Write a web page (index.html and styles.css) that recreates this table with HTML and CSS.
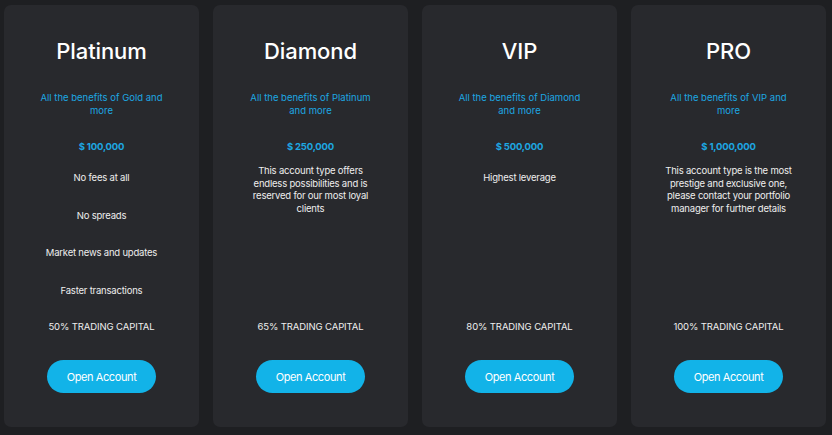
FILE: index.html
```html
<!DOCTYPE html>
<html>
<head>
<meta charset="utf-8">
<link rel="stylesheet" href="styles.css">
</head>
<body>
<div class="plans">
  <div class="card">
    <h2 class="title">Platinum</h2>
    <p class="sub">All the benefits of Gold and more</p>
    <p class="price">$ 100,000</p>
    <ul class="features">
      <li>No fees at all</li>
      <li>No spreads</li>
      <li>Market news and updates</li>
      <li>Faster transactions</li>
    </ul>
    <p class="capital">50% TRADING CAPITAL</p>
    <button class="btn">Open Account</button>
  </div>
  <div class="card">
    <h2 class="title">Diamond</h2>
    <p class="sub">All the benefits of Platinum and more</p>
    <p class="price">$ 250,000</p>
    <div class="features">
      <p class="desc">This account type offers endless possibilities and is reserved for our most loyal clients</p>
    </div>
    <p class="capital">65% TRADING CAPITAL</p>
    <button class="btn">Open Account</button>
  </div>
  <div class="card">
    <h2 class="title">VIP</h2>
    <p class="sub">All the benefits of Diamond and more</p>
    <p class="price">$ 500,000</p>
    <ul class="features">
      <li>Highest leverage</li>
    </ul>
    <p class="capital">80% TRADING CAPITAL</p>
    <button class="btn">Open Account</button>
  </div>
  <div class="card">
    <h2 class="title">PRO</h2>
    <p class="sub">All the benefits of VIP and more</p>
    <p class="price">$ 1,000,000</p>
    <div class="features">
      <p class="desc">This account type is the most prestige and exclusive one, please contact your portfolio manager for further details</p>
    </div>
    <p class="capital">100% TRADING CAPITAL</p>
    <button class="btn">Open Account</button>
  </div>
</div>
</body>
</html>
```
FILE: styles.css
```css
* { box-sizing: border-box; }
html, body {
  margin: 0;
  padding: 0;
  background: #1e1f22;
  font-family: "Inter", "Noto Sans", sans-serif;
}
.plans {
  display: flex;
  gap: 14px;
  padding: 5px 6px 8px 4px;
  height: 435px;
}
.card {
  width: 195px;
  height: 422px;
  background: #28292d;
  border-radius: 7px;
  display: flex;
  flex-direction: column;
  align-items: center;
  text-align: center;
  padding: 32px 30px 34px;
}
.title {
  margin: 0;
  font-size: 22px;
  line-height: 28px;
  font-weight: 500;
  color: #ffffff;
  letter-spacing: -0.1px;
}
.sub {
  margin: 26px 0 0;
  font-size: 9.5px;
  line-height: 13px;
  color: #1da7e2;
  letter-spacing: 0;
  max-width: 126px;
}
.price {
  margin: 23px 0 0;
  font-size: 9.5px;
  line-height: 13px;
  font-weight: 700;
  color: #1da7e2;
  letter-spacing: -0.2px;
}
.features {
  flex: 1;
  list-style: none;
  margin: 18px 0 0;
  padding: 0;
  display: flex;
  flex-direction: column;
  align-items: center;
  gap: 24.5px;
  font-size: 9.5px;
  line-height: 13px;
  color: #eeeeee;
  letter-spacing: -0.2px;
}
.desc {
  margin: -6px 0 0;
  line-height: 12.5px;
  max-width: 132px;
}
.capital {
  margin: 3px 0 0;
  font-size: 9.5px;
  line-height: 13px;
  color: #eeeeee;
  letter-spacing: -0.1px;
}
.btn {
  margin-top: 27px;
  width: 109px;
  height: 33px;
  border: none;
  border-radius: 17px;
  background: #12b3e8;
  color: #ffffff;
  font-family: inherit;
  font-size: 11px;
  letter-spacing: -0.4px;
  cursor: pointer;
}
```
